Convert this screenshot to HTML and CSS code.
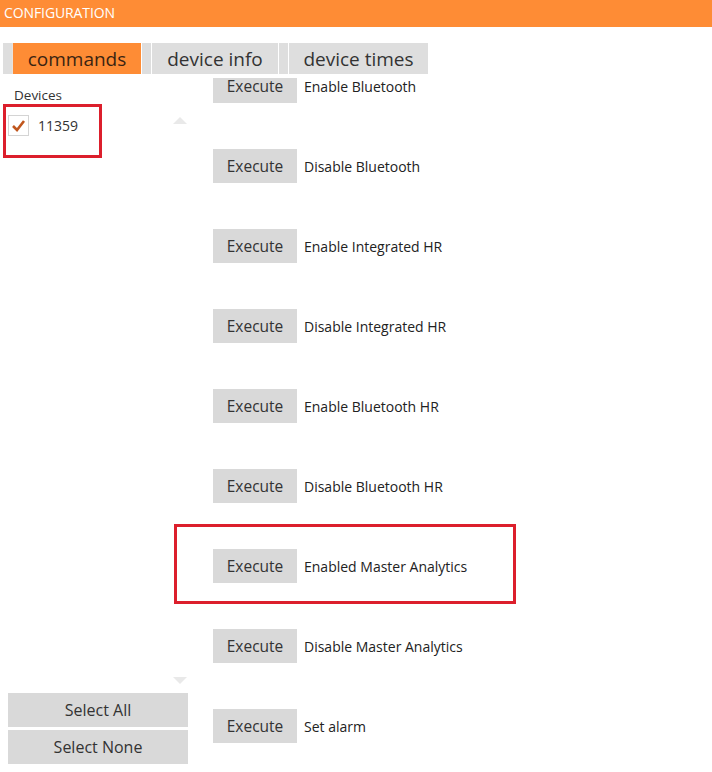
FILE: index.html
```html
<!DOCTYPE html>
<html lang="en">
<head>
    <meta charset="UTF-8">
    <meta name="viewport" content="width=device-width, initial-scale=1.0">
    <title>Configuration</title>
    <link rel="stylesheet" href="styles.css">
</head>
<body>
    <header class="title-bar">CONFIGURATION</header>

    <div class="tab-strip">
        <div class="tab active"><span class="tab-label">commands</span></div>
        <div class="tab"><span class="tab-label">device info</span></div>
        <div class="tab"><span class="tab-label">device times</span></div>
    </div>

    <div class="main">
        <div class="devices">
            <div class="devices-title">Devices</div>
            <div class="device-list">
                <div class="device-row">
                    <label class="device">
                        <span class="check-box">
                            <svg width="15" height="15" viewBox="0 0 15 15"><path d="M2 8 L6 12 L13 3" fill="none" stroke="#c0561d" stroke-width="2.6" stroke-linejoin="miter"/></svg>
                        </span>
                        11359
                    </label>
                    <span class="arrow-up"></span>
                </div>
            </div>
            <div class="arrow-row"><span class="arrow-down"></span></div>
            <button class="select-btn">Select All</button>
            <button class="select-btn">Select None</button>
        </div>

        <div class="commands">
            <div class="command-list">
                <div class="command"><button class="exec-btn">Execute</button><span>Enable Bluetooth</span></div>
                <div class="command"><button class="exec-btn">Execute</button><span>Disable Bluetooth</span></div>
                <div class="command"><button class="exec-btn">Execute</button><span>Enable Integrated HR</span></div>
                <div class="command"><button class="exec-btn">Execute</button><span>Disable Integrated HR</span></div>
                <div class="command"><button class="exec-btn">Execute</button><span>Enable Bluetooth HR</span></div>
                <div class="command"><button class="exec-btn">Execute</button><span>Disable Bluetooth HR</span></div>
                <div class="command"><button class="exec-btn">Execute</button><span>Enabled Master Analytics</span></div>
                <div class="command"><button class="exec-btn">Execute</button><span>Disable Master Analytics</span></div>
                <div class="command"><button class="exec-btn">Execute</button><span>Set alarm</span></div>
            </div>
        </div>
    </div>

    <!-- red annotation boxes -->
    <div class="mark mark-device"></div>
    <div class="mark mark-command"></div>
</body>
</html>
```

FILE: styles.css
```css
body {
    font-family: "Open Sans", "Noto Sans", sans-serif;
    color: #333;
    margin: 0;
    padding: 0;
    height: 100vh;
    display: flex;
    flex-direction: column;
    overflow: hidden;
    background-color: #fff;
}

.title-bar {
    background-color: #fe8c35;
    color: #fff;
    font-size: 14px;
    height: 27px;
    line-height: 26px;
    padding-left: 4px;
    letter-spacing: -0.1px;
}

.tab-strip {
    display: flex;
    margin: 16px 0 0 3px;
    height: 31px;
    align-self: flex-start;
}

.tab {
    display: flex;
    background-color: #dedede;
    padding-left: 9px;
    border-right: 1px solid #fff;
}

.tab-label {
    display: flex;
    align-items: center;
    justify-content: center;
    border-left: 1px solid #fff;
    background-color: #dedede;
    font-size: 19px;
    color: #333;
}

.tab:nth-child(1) .tab-label { width: 128px; }
.tab:nth-child(2) .tab-label { width: 126px; }
.tab:nth-child(3) .tab-label { width: 139px; }

.tab.active .tab-label {
    background-color: #fe8c35;
    border-left-color: #e9e2dc;
    color: #3a2412;
}

.main {
    flex: 1;
    display: flex;
    min-height: 0;
}

.devices {
    width: 200px;
    display: flex;
    flex-direction: column;
    padding-bottom: 8px;
}

.devices-title {
    font-size: 13.5px;
    margin: 12px 0 0 14px;
    line-height: 18px;
}

.device-list {
    flex: 1;
    margin-top: 11px;
}

.device-row {
    display: flex;
    justify-content: space-between;
    align-items: flex-start;
    padding: 0 13px 0 8px;
}

.device {
    display: flex;
    align-items: center;
    gap: 9px;
    font-size: 14px;
}

.check-box {
    width: 19px;
    height: 19px;
    border: 1px solid #d4d4d4;
    display: flex;
    align-items: center;
    justify-content: center;
    background-color: #fff;
}

.arrow-up,
.arrow-down {
    width: 0;
    height: 0;
    border-left: 7px solid transparent;
    border-right: 7px solid transparent;
}

.arrow-up {
    border-bottom: 7px solid #e9e9e9;
    margin-top: 2px;
}

.arrow-row {
    padding-left: 173px;
    margin-bottom: 9px;
}

.arrow-down {
    display: block;
    border-top: 7px solid #e9e9e9;
}

button {
    font-family: inherit;
    border: none;
    background-color: #d9d9d9;
    color: #333;
    cursor: pointer;
    padding: 0;
}

.select-btn {
    width: 180px;
    height: 34px;
    margin-left: 8px;
    font-size: 16px;
}

.select-btn + .select-btn {
    margin-top: 3px;
}

.commands {
    flex: 1;
    margin: 4px 0 0 13px;
    overflow: hidden;
}

.command-list {
    margin-top: -9px;
}

.command {
    display: flex;
    align-items: center;
    gap: 7px;
    height: 34px;
    margin-bottom: 46px;
    font-size: 14px;
    color: #222;
}

.exec-btn {
    width: 84px;
    height: 34px;
    font-size: 15.5px;
}

.mark {
    position: absolute;
    border: 3px solid #dc1f2c;
    box-sizing: border-box;
}

.mark-device {
    left: 3px;
    top: 104px;
    width: 99px;
    height: 54px;
}

.mark-command {
    left: 174px;
    top: 524px;
    width: 342px;
    height: 80px;
}
```
